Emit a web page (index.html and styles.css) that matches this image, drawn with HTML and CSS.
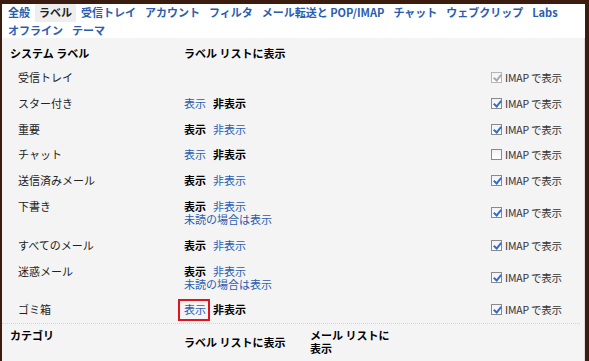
FILE: index.html
```html
<!DOCTYPE html>
<html lang="ja">
<head>
    <meta charset="UTF-8">
    <title>設定 - ラベル</title>
    <link rel="stylesheet" href="styles.css">
</head>
<body>
    <div class="panel">
        <div class="tabs">
            <a class="tab">全般</a>
            <a class="tab active">ラベル</a>
            <a class="tab">受信トレイ</a>
            <a class="tab">アカウント</a>
            <a class="tab">フィルタ</a>
            <a class="tab">メール転送と POP/IMAP</a>
            <a class="tab">チャット</a>
            <a class="tab">ウェブクリップ</a>
            <a class="tab">Labs</a>
            <a class="tab">オフライン</a>
            <a class="tab">テーマ</a>
        </div>

        <div class="content">
            <div class="row head">
                <div class="name">システム ラベル</div>
                <div>ラベル リストに表示</div>
                <div></div>
            </div>

            <div class="row">
                <div class="name sub">受信トレイ</div>
                <div></div>
                <label class="imap"><span class="check on disabled"></span>IMAP で表示</label>
            </div>

            <div class="row">
                <div class="name sub">スター付き</div>
                <div class="opts"><a>表示</a><b>非表示</b></div>
                <label class="imap"><span class="check on"></span>IMAP で表示</label>
            </div>

            <div class="row">
                <div class="name sub">重要</div>
                <div class="opts"><b>表示</b><a>非表示</a></div>
                <label class="imap"><span class="check on"></span>IMAP で表示</label>
            </div>

            <div class="row">
                <div class="name sub">チャット</div>
                <div class="opts"><a>表示</a><b>非表示</b></div>
                <label class="imap"><span class="check"></span>IMAP で表示</label>
            </div>

            <div class="row">
                <div class="name sub">送信済みメール</div>
                <div class="opts"><b>表示</b><a>非表示</a></div>
                <label class="imap"><span class="check on"></span>IMAP で表示</label>
            </div>

            <div class="row">
                <div class="name sub">下書き</div>
                <div>
                    <div class="opts"><b>表示</b><a>非表示</a></div>
                    <a class="unread">未読の場合は表示</a>
                </div>
                <label class="imap"><span class="check on"></span>IMAP で表示</label>
            </div>

            <div class="row">
                <div class="name sub">すべてのメール</div>
                <div class="opts"><b>表示</b><a>非表示</a></div>
                <label class="imap"><span class="check on"></span>IMAP で表示</label>
            </div>

            <div class="row">
                <div class="name sub">迷惑メール</div>
                <div>
                    <div class="opts"><b>表示</b><a>非表示</a></div>
                    <a class="unread">未読の場合は表示</a>
                </div>
                <label class="imap"><span class="check on"></span>IMAP で表示</label>
            </div>

            <div class="row last">
                <div class="name sub">ゴミ箱</div>
                <div class="opts"><a class="marked">表示</a><b>非表示</b></div>
                <label class="imap"><span class="check on"></span>IMAP で表示</label>
            </div>

            <div class="row head cat">
                <div class="name">カテゴリ</div>
                <div class="mid">ラベル リストに表示</div>
                <div class="narrow">メール リストに<br>表示</div>
            </div>
        </div>
    </div>
</body>
</html>
```

FILE: styles.css
```css
* {
    box-sizing: border-box;
    margin: 0;
    padding: 0;
}

body {
    font-family: "Noto Sans CJK JP", "Liberation Sans", sans-serif;
    font-size: 11px;
    line-height: 13px;
    color: #222;
    background-color: #3b1c0f;
    padding: 4px 4px 0 2px;
    height: 361px;
    overflow: hidden;
}

.panel {
    background: white;
    height: 100%;
}

a {
    color: #2a5db0;
    cursor: pointer;
}

b {
    color: #000;
}

.tabs {
    display: flex;
    flex-wrap: wrap;
    column-gap: 1px;
    padding: 0 0 0 2px;
    height: 34px;
}

.tab {
    font-weight: bold;
    padding: 2px 4px 3px;
    line-height: 13px;
    white-space: nowrap;
}

.tab.active {
    color: #222;
    background-color: #eeeeee;
}

.content {
    background-color: #f4f4f4;
    border-right: 1px solid #dcdcdc;
    height: 100%;
    padding-top: 2px;
}

.row {
    display: grid;
    grid-template-columns: 174px 307px 1fr;
    padding: 6px 0 6.8px 8px;
}

.row.head {
    font-weight: bold;
    color: #000;
    padding-top: 7px;
    padding-bottom: 5px;
}

.row.last {
    border-bottom: 1px dotted #d4d4d4;
    margin-right: 4px;
}

.row.cat {
    grid-template-columns: 174px 126px 1fr;
    padding-top: 5px;
}

.row.cat .mid {
    align-self: center;
}

.name.sub {
    padding-left: 8px;
}

.opts {
    display: flex;
    gap: 7px;
}

.unread {
    display: block;
}

.marked {
    position: relative;
}

.marked::after {
    content: "";
    position: absolute;
    left: -6px;
    right: -4px;
    top: -4px;
    bottom: -5px;
    border: 2px solid #e0141e;
}

.imap {
    display: flex;
    align-items: center;
    gap: 3px;
    color: #333;
    font-size: 10.5px;
    letter-spacing: -0.2px;
}

.check {
    width: 11px;
    height: 11px;
    border: 1px solid #8a8a8a;
    background: linear-gradient(#f2f2f2, #ffffff);
    position: relative;
}

.check.on::after {
    content: "";
    position: absolute;
    left: 3px;
    top: 0;
    width: 3px;
    height: 6px;
    border: solid #2f6ed8;
    border-width: 0 2px 2px 0;
    transform: rotate(40deg);
}

.check.disabled {
    border-color: #b5b5b5;
}

.check.disabled::after {
    border-color: #a8a8a8;
}
```
